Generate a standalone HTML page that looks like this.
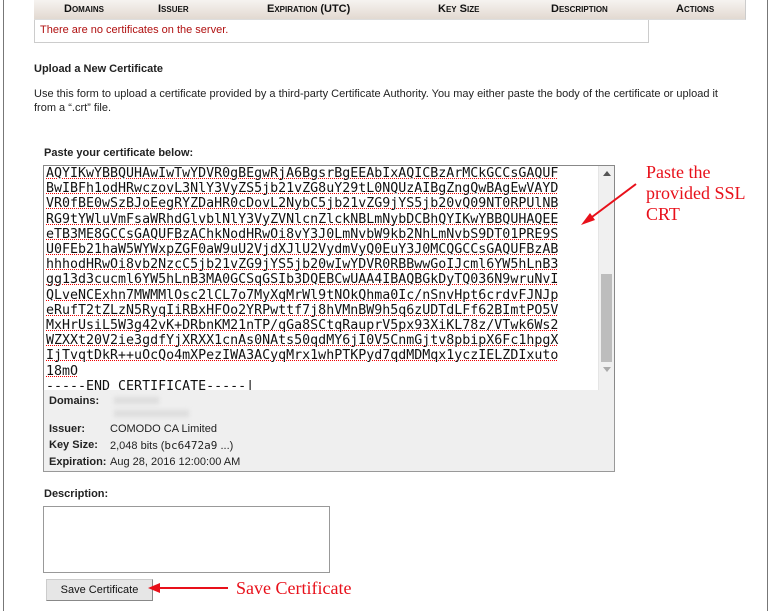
<!DOCTYPE html>
<html><head><meta charset="utf-8"><style>
*{box-sizing:border-box}
body{margin:0;width:771px;height:611px;overflow:hidden;background:#fff;font-family:"Liberation Sans",sans-serif;font-size:11px;color:#222;position:relative}
.vl{position:absolute;top:0;width:1px;height:611px;background:#777}
.hdr{position:absolute;left:34px;top:0;width:712px;height:20px;background:linear-gradient(#f6f3f0,#e2d9d1);border-right:1px solid #ccc;border-bottom:1px solid #ddd}
.hdr span{position:absolute;top:3px;font-weight:bold;font-size:11px;font-variant:small-caps;color:#111}
.msg{position:absolute;left:34px;top:20px;width:615px;height:23px;border:1px solid #ccc;border-top:none}
.msg div{position:absolute;left:5px;top:4px;color:#b01010;font-size:11px}
.t{position:absolute}
.ta{position:absolute;left:43px;top:165px;width:572px;height:226px;border:1px solid #888;background:#fff;overflow:hidden}
.code{position:absolute;left:2px;top:0;font-family:"DejaVu Sans Mono",monospace;font-size:13.3px;line-height:15.2px;color:#111;white-space:pre}
.code .u{text-decoration:underline dotted #e00;text-decoration-thickness:1px;text-underline-offset:1px}
.sb{position:absolute;right:0;top:0;width:16px;height:100%;background:#f0f0f0;border-left:1px solid #e5e5e5}
.th{position:absolute;left:2px;top:108px;width:11px;height:88px;background:#bdbdbd}
.info{position:absolute;left:43px;top:390px;width:572px;height:82px;background:#efefef;border:1px solid #999;border-top:none;font-size:11px}
.info b{position:absolute;left:5px}
.info span{position:absolute;left:66px}
.blur{position:absolute;height:7px;background:#ddd;filter:blur(2px)}
.red{color:#e8101a;font-family:"Liberation Serif",serif;font-size:18px;position:absolute}
</style></head><body>
<div class="vl" style="left:3px"></div>
<div class="vl" style="left:767px"></div>
<div class="hdr">
<span style="left:30px">Domains</span>
<span style="left:124px">Issuer</span>
<span style="left:233px">Expiration (UTC)</span>
<span style="left:404px">Key Size</span>
<span style="left:517px">Description</span>
<span style="left:642px">Actions</span>
</div>
<div class="msg"><div>There are no certificates on the server.</div></div>
<div class="t" style="left:34px;top:63px;font-weight:bold;font-size:11px">Upload a New Certificate</div>
<div class="t" style="left:34px;top:87px;width:700px;line-height:14px">Use this form to upload a certificate provided by a third-party Certificate Authority. You may either paste the body of the certificate or upload it from a “.crt” file.</div>
<div class="t" style="left:44px;top:147px;font-weight:bold">Paste your certificate below:</div>
<div class="ta"><div class="code"><span class="u">AQYIKwYBBQUHAwIwTwYDVR0gBEgwRjA6BgsrBgEEAbIxAQICBzArMCkGCCsGAQUF</span>
<span class="u">BwIBFh1odHRwczovL3NlY3VyZS5jb21vZG8uY29tL0NQUzAIBgZngQwBAgEwVAYD</span>
<span class="u">VR0fBE0wSzBJoEegRYZDaHR0cDovL2NybC5jb21vZG9jYS5jb20vQ09NT0RPUlNB</span>
<span class="u">RG9tYWluVmFsaWRhdGlvblNlY3VyZVNlcnZlckNBLmNybDCBhQYIKwYBBQUHAQEE</span>
<span class="u">eTB3ME8GCCsGAQUFBzAChkNodHRwOi8vY3J0LmNvbW9kb2NhLmNvbS9DT01PRE9S</span>
<span class="u">U0FEb21haW5WYWxpZGF0aW9uU2VjdXJlU2VydmVyQ0EuY3J0MCQGCCsGAQUFBzAB</span>
<span class="u">hhhodHRwOi8vb2NzcC5jb21vZG9jYS5jb20wIwYDVR0RBBwwGoIJcml6YW5hLnB3</span>
<span class="u">gg13d3cucml6YW5hLnB3MA0GCSqGSIb3DQEBCwUAA4IBAQBGkDyTQ036N9wruNvI</span>
<span class="u">QLveNCExhn7MWMMlOsc2lCL7o7MyXqMrWl9tNOkQhma0Ic/nSnvHpt6crdvFJNJp</span>
<span class="u">eRufT2tZLzN5RyqIiRBxHFOo2YRPwttf7j8hVMnBW9h5q6zUDTdLFf62BImtPO5V</span>
<span class="u">MxHrUsiL5W3g42vK+DRbnKM21nTP/qGa8SCtqRauprV5px93XiKL78z/VTwk6Ws2</span>
<span class="u">WZXXt20V2ie3gdfYjXRXX1cnAs0NAts50qdMY6jI0V5CnmGjtv8pbipX6Fc1hpgX</span>
<span class="u">IjTvqtDkR++uOcQo4mXPezIWA3ACyqMrx1whPTKPyd7qdMDMqx1yczIELZDIxuto</span>
<span class="u">18mO</span>
-----END CERTIFICATE-----|</div>
<div class="sb"><div style="position:absolute;left:4px;top:5px;border:4px solid transparent;border-bottom:5px solid #555;border-top:none"></div><div class="th"></div><div style="position:absolute;left:4px;top:201px;border:4px solid transparent;border-top:5px solid #aaa;border-bottom:none"></div></div>
</div>
<div class="info">
<b style="top:5px">Domains:</b>
<div class="blur" style="left:70px;top:7px;width:45px"></div>
<div class="blur" style="left:70px;top:20px;width:75px"></div>
<b style="top:33px">Issuer:</b><span style="top:33px">COMODO CA Limited</span>
<b style="top:49px">Key Size:</b><span style="top:49px">2,048 bits (<span style="position:static;font-family:'DejaVu Sans Mono',monospace">bc6472a9</span> ...)</span>
<b style="top:66px">Expiration:</b><span style="top:66px">Aug 28, 2016 12:00:00 AM</span>
</div>
<div class="t" style="left:44px;top:488px;font-weight:bold">Description:</div>
<div class="t" style="left:43px;top:506px;width:287px;height:67px;border:1px solid #999"></div>
<div class="t" style="left:46px;top:579px;width:107px;height:22px;background:#e6e6e6;border:1px solid #ccc;border-right-color:#888;border-bottom-color:#888;text-align:center;line-height:20px;font-size:11px;color:#111">Save Certificate</div>
<div class="red" style="left:646px;top:162px;line-height:21px">Paste the<br>provided SSL<br>CRT</div>
<div class="red" style="left:236px;top:578px">Save Certificate</div>
<svg class="t" style="left:0;top:0" width="771" height="611">
<line x1="636" y1="184" x2="588" y2="220" stroke="#e8101a" stroke-width="2"/>
<polygon points="581,225 590,213 595,220" fill="#e8101a"/>
<line x1="228" y1="588" x2="158" y2="588" stroke="#e8101a" stroke-width="2"/>
<polygon points="148,588 160,583 160,593" fill="#e8101a"/>
</svg>
</body></html>
